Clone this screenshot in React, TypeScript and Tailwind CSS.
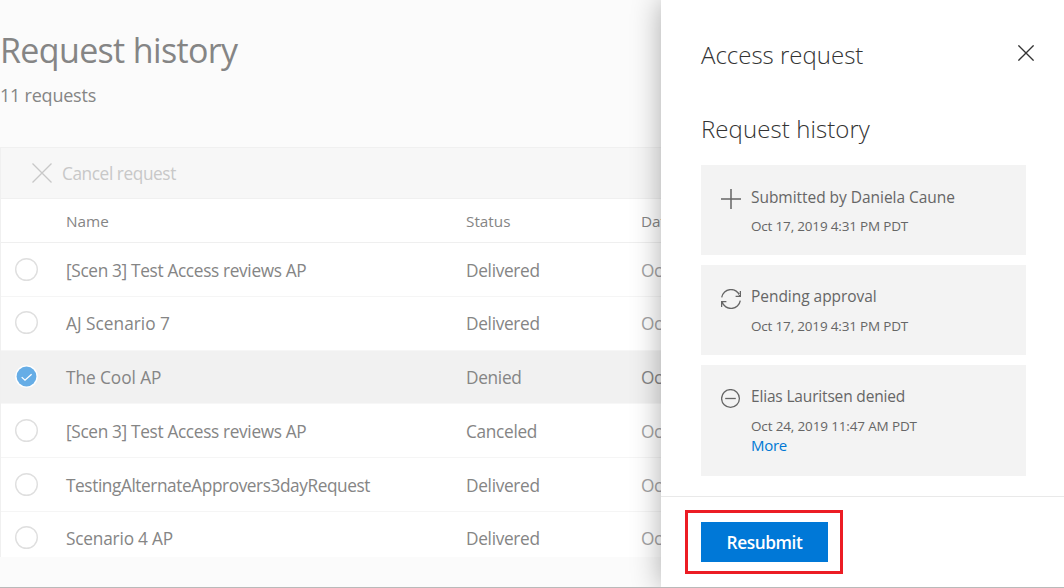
import React from 'react';

type Request = {
  name: string;
  status: string;
  nameClass: string;
  rowClass: string;
  selected?: boolean;
};

const requests: Request[] = [
  { name: '[Scen 3] Test Access reviews AP', status: 'Delivered', nameClass: 'tracking-[-0.34px]', rowClass: 'h-[54px] border-[#f5f5f5] pt-[2px]' },
  { name: 'AJ Scenario 7', status: 'Delivered', nameClass: 'tracking-[0.02px]', rowClass: 'h-[54px] border-[#f6f6f6]' },
  { name: 'The Cool AP', status: 'Denied', nameClass: 'tracking-[-0.05px]', rowClass: 'h-[53px] border-[#f7f7f7] bg-[#f1f1f1]', selected: true },
  { name: '[Scen 3] Test Access reviews AP', status: 'Canceled', nameClass: 'tracking-[-0.34px]', rowClass: 'h-[54px] border-[#f5f5f5] pt-[2px]' },
  { name: 'TestingAlternateApprovers3dayRequest', status: 'Delivered', nameClass: 'tracking-[-0.42px]', rowClass: 'h-[54px] border-[#f5f5f5] pt-[2px]' },
  { name: 'Scenario 4 AP', status: 'Delivered', nameClass: 'tracking-[-0.19px]', rowClass: 'h-[54px] border-[#f5f5f5]' },
];

function CrossIcon({ className, width }: { className: string; width: number }) {
  return (
    <svg viewBox="0 0 20 20" className={className} fill="none" stroke="currentColor" strokeWidth={width}>
      <path d="M.5 .5 19.5 19.5M19.5 .5 .5 19.5" />
    </svg>
  );
}

function PlusIcon() {
  return (
    <svg viewBox="0 0 20 20" className="h-5 w-5" fill="none" stroke="currentColor" strokeWidth="1.5">
      <path d="M10 0V20M0 10H20" />
    </svg>
  );
}

function SyncIcon() {
  return (
    <svg viewBox="0 0 20 20" className="h-5 w-5" fill="none" stroke="currentColor" strokeWidth="1.3">
      <path d="M.7 8.4A9.4 9.4 0 0 1 18.9 7M19.4 2V7.3H14.6" />
      <path d="M19.3 11.6A9.4 9.4 0 0 1 1.1 13M.6 18V12.7H5.4" />
    </svg>
  );
}

function DeniedIcon() {
  return (
    <svg viewBox="0 0 20 20" className="h-5 w-5" fill="none" stroke="currentColor" strokeWidth="1.3">
      <circle cx="9.5" cy="9.5" r="8.9" />
      <path d="M4.2 9.5H14.8" />
    </svg>
  );
}

function RowCheck({ selected }: { selected?: boolean }) {
  return (
    <svg viewBox="0 0 23 23" className="mb-[2px] h-[23px] w-[23px]" fill="none">
      {selected ? (
        <>
          <circle cx="11.5" cy="11.5" r="11.3" fill="#fff" />
          <circle cx="11.5" cy="11.5" r="9.9" fill="#66ade6" />
          <path d="M6.7 12.1 10 15.2 16.6 9.2" stroke="#fff" strokeWidth="1.3" />
        </>
      ) : (
        <circle cx="11.5" cy="11.5" r="10.8" fill="#fff" stroke="#dfdfdf" strokeWidth="1.4" />
      )}
    </svg>
  );
}

function Toolbar() {
  return (
    <div className="flex h-[52px] items-center border-y border-[#f0f0f0] bg-[#f7f7f7] pl-[31px] text-[17.25px] text-[#c8c8c8]">
      <CrossIcon className="h-5 w-5" width={1.3} />
      <span className="ml-[10px] pt-px tracking-[-0.42px]">Cancel request</span>
    </div>
  );
}

function RequestTable() {
  return (
    <div className="h-[410px] overflow-hidden border-l border-[#f0f0f0] bg-white">
      <Toolbar />
      <div className="flex h-11 items-center border-b border-[#efefef] pl-[65px] pt-[2px] text-[15.3px]">
        <span className="w-[400px] shrink-0">Name</span>
        <span className="w-[175px] shrink-0">Status</span>
        <span>Date</span>
      </div>
      {requests.map((r, i) => (
        <div key={i} className={`flex items-center border-b pl-[14px] text-[17.25px] ${r.rowClass}`}>
          <div className="w-[51px] shrink-0">
            <RowCheck selected={r.selected} />
          </div>
          <span className={`w-[400px] shrink-0 whitespace-nowrap pt-px ${r.nameClass}`}>{r.name}</span>
          <span className="w-[175px] shrink-0 pt-px tracking-[-0.31px]">{r.status}</span>
          <span className={r.selected ? 'pt-px tracking-[-0.31px]' : 'pt-px tracking-[-0.31px] text-[#a3a3a3]'}>Oct</span>
        </div>
      ))}
    </div>
  );
}

function HistoryCard({
  icon,
  title,
  date,
  cardClass,
  titleClass,
  dateClass,
  link,
}: {
  icon: React.ReactNode;
  title: string;
  date: string;
  cardClass: string;
  titleClass: string;
  dateClass: string;
  link?: string;
}) {
  return (
    <div className={`flex bg-[#f3f3f3] pl-5 text-[#666] ${cardClass}`}>
      <div className="w-[30px] shrink-0 pt-6">{icon}</div>
      <div className="whitespace-nowrap">
        <div className={`text-[15.5px] leading-5 ${titleClass}`}>{title}</div>
        <div className={`text-[13.5px] leading-5 ${dateClass}`}>{date}</div>
        {link && <a className="mt-[-1px] block text-[15px] leading-5 tracking-[-0.3px] text-[#0078d4]">{link}</a>}
      </div>
    </div>
  );
}

function AccessPanel() {
  return (
    <aside className="z-10 flex w-[403px] shrink-0 flex-col bg-white shadow-[0_0_28px_rgba(0,0,0,0.32)]">
      <div className="flex h-[497px] flex-col border-b border-[#e9e9e9] pl-10 pr-[38px]">
        <div className="flex items-start justify-between pt-[35px] text-[#333]">
          <h2 className="text-[24px] font-light leading-10">Access request</h2>
          <CrossIcon className="mr-[-8px] mt-[10px] h-4 w-4" width={1.7} />
        </div>
        <h3 className="mt-[34px] text-[24px] font-light leading-10 tracking-[0.08px] text-[#333]">Request history</h3>
        <div className="mt-4 flex flex-col gap-[10px]">
          <HistoryCard
            icon={<PlusIcon />}
            title="Submitted by Daniela Caune"
            date="Oct 17, 2019 4:31 PM PDT"
            cardClass="h-[90px]"
            titleClass="mt-[22px] tracking-[-0.04px]"
            dateClass="mt-[9px] tracking-[-0.18px]"
          />
          <HistoryCard
            icon={<SyncIcon />}
            title="Pending approval"
            date="Oct 17, 2019 4:31 PM PDT"
            cardClass="h-[90px]"
            titleClass="mt-[21px] tracking-[-0.04px]"
            dateClass="mt-[10px] tracking-[-0.18px]"
          />
          <HistoryCard
            icon={<DeniedIcon />}
            title="Elias Lauritsen denied"
            date="Oct 24, 2019 11:47 AM PDT"
            cardClass="h-[111px]"
            titleClass="mt-[21px] tracking-[-0.17px]"
            dateClass="mt-[10px] tracking-[-0.15px]"
            link="More"
          />
        </div>
      </div>
      <div className="pl-6 pt-[13px]">
        <div className="h-16 w-[158px] border-[3px] border-[#ec1c24] pl-[13px] pt-[9px]">
          <button className="h-10 w-[127px] bg-[#0078d7] pt-px text-[17.25px] font-semibold tracking-[-0.4px] text-white">Resubmit</button>
        </div>
      </div>
    </aside>
  );
}

export default function App() {
  return (
    <div className="flex h-[588px] w-[1064px] flex-col overflow-hidden bg-[#fbfbfb] font-['Open_Sans','Noto_Sans',sans-serif] text-[#858585]">
      <div className="flex h-[587px] overflow-hidden">
        <main className="flex w-[661px] shrink-0 flex-col overflow-hidden">
          <h1 className="mt-[25px] text-[34px] leading-[50px] tracking-[-0.65px]">Request history</h1>
          <p className="mt-[8px] text-[18px] leading-6 tracking-[-0.22px]">11 requests</p>
          <div className="mt-[40px]">
            <RequestTable />
          </div>
        </main>
        <AccessPanel />
      </div>
      <div className="h-px bg-[#b9b9b9]" />
    </div>
  );
}
